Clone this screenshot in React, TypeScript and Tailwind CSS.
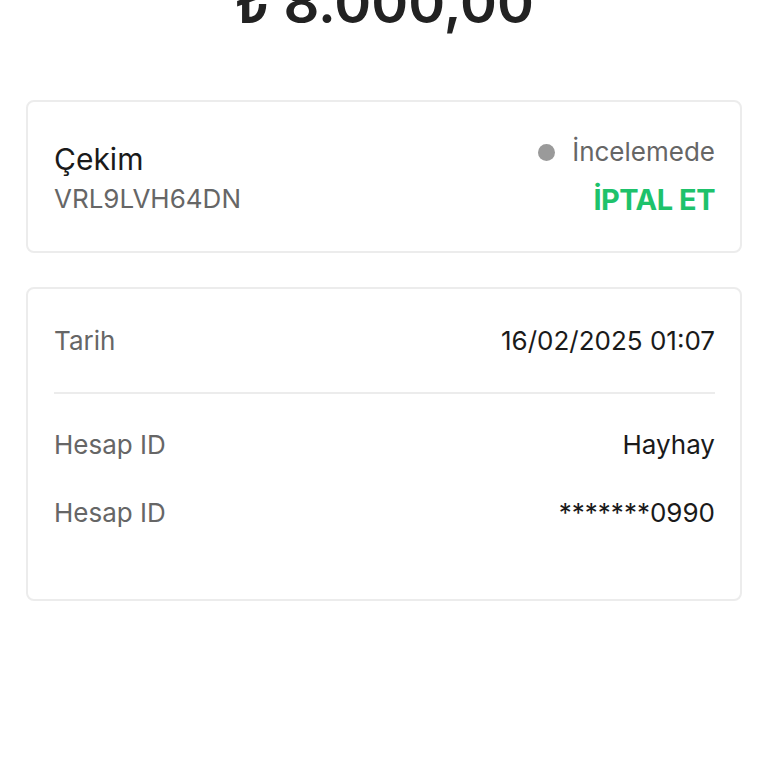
import React from "react";

export default function App() {
  return (
    <div className="w-[768px] h-[768px] bg-white overflow-hidden" style={{ fontFamily: "Inter, 'Noto Sans', sans-serif" }}>
      <div className="text-center text-[56px] font-semibold leading-none text-[#222] -mt-[25px]">₺ 8.000,00</div>
      <div className="px-[26px] pt-[69px] flex flex-col gap-[34px]">
        <div className="border-2 border-[#ececec] rounded-[8px] pl-[26px] pr-[25px] pt-[34px] pb-[35px] flex justify-between items-start">
          <div className="flex flex-col gap-[6px] pt-[5px]">
            <div className="text-[30px] leading-[36px] text-[#1a1a1a]">Çekim</div>
            <div className="text-[26px] leading-[32px] text-[#666]">VRL9LVH64DN</div>
          </div>
          <div className="flex flex-col items-end gap-[16px]">
            <div className="flex items-center gap-[17px]">
              <span className="w-[17px] h-[17px] rounded-full bg-[#9a9a9a]" />
              <span className="text-[26px] leading-[32px] text-[#666]">İncelemede</span>
            </div>
            <div className="text-[29px] leading-[32px] font-bold text-[#1ec26b] tracking-[-0.5px]">İPTAL ET</div>
          </div>
        </div>
        <div className="border-2 border-[#ececec] rounded-[8px] pl-[26px] pr-[25px] pt-[34px] pb-[68px]">
          <div className="flex justify-between items-center text-[26px] leading-[36px]">
            <span className="text-[#666]">Tarih</span>
            <span className="text-[#1a1a1a]">16/02/2025 01:07</span>
          </div>
          <div className="h-[2px] bg-[#ececec] mt-[33px] mb-[33px]" />
          <div className="flex flex-col gap-[32px]">
            <div className="flex justify-between items-center text-[26px] leading-[36px]">
              <span className="text-[#666]">Hesap ID</span>
              <span className="text-[#1a1a1a]">Hayhay</span>
            </div>
            <div className="flex justify-between items-center text-[26px] leading-[36px]">
              <span className="text-[#666]">Hesap ID</span>
              <span className="text-[#1a1a1a]">*******0990</span>
            </div>
          </div>
        </div>
      </div>
    </div>
  );
}
